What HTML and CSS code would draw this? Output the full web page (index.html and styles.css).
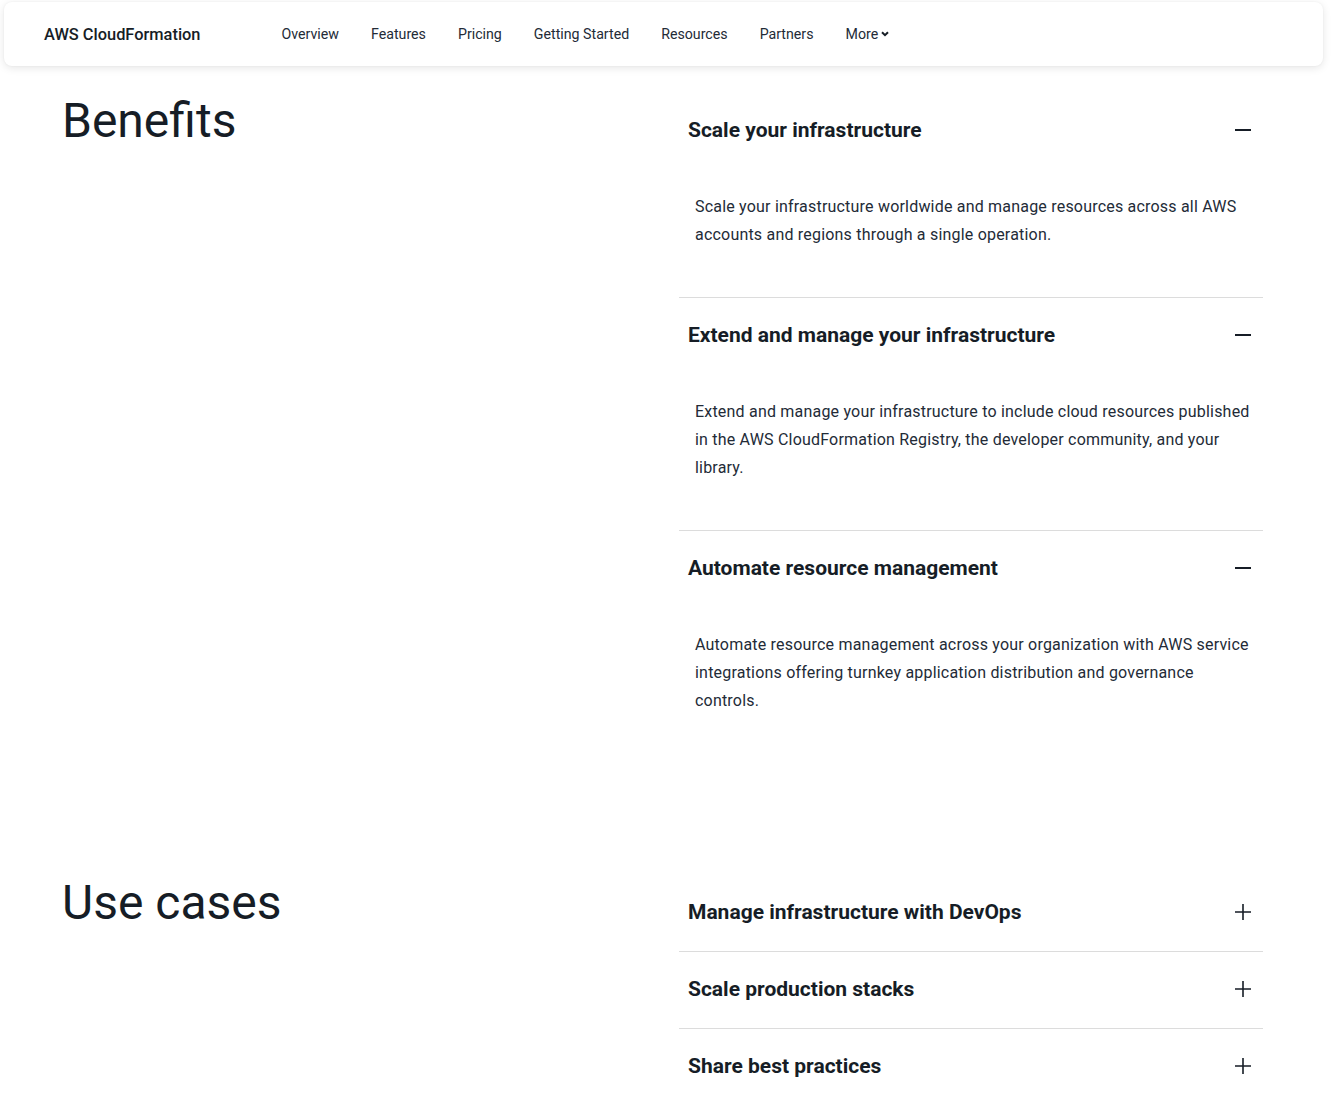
FILE: index.html
```html
<!DOCTYPE html>
<html lang="en">
<head>
<meta charset="utf-8">
<title>AWS CloudFormation</title>
<link rel="stylesheet" href="styles.css">
</head>
<body>
<header class="nav">
  <div class="brand">AWS CloudFormation</div>
  <ul class="nav-links">
    <li>Overview</li>
    <li>Features</li>
    <li>Pricing</li>
    <li>Getting Started</li>
    <li>Resources</li>
    <li>Partners</li>
    <li class="more">More
      <svg class="chev" width="8" height="6" viewBox="0 0 8 6"><path d="M1 1.2l3 3 3-3" fill="none" stroke="#161d26" stroke-width="2"/></svg>
    </li>
  </ul>
</header>

<main>
  <section class="block benefits">
    <h2 class="block-title">Benefits</h2>
    <div class="accordion">
      <div class="item open">
        <div class="item-head">
          <h3>Scale your infrastructure</h3>
          <svg class="icon" width="16" height="16" viewBox="0 0 16 16"><path d="M0 8h16" stroke="#161d26" stroke-width="2"/></svg>
        </div>
        <p class="item-body">Scale your infrastructure worldwide and manage resources across all AWS accounts and regions through a single operation.</p>
      </div>
      <div class="item open">
        <div class="item-head">
          <h3>Extend and manage your infrastructure</h3>
          <svg class="icon" width="16" height="16" viewBox="0 0 16 16"><path d="M0 8h16" stroke="#161d26" stroke-width="2"/></svg>
        </div>
        <p class="item-body">Extend and manage your infrastructure to include cloud resources published in the AWS CloudFormation Registry, the developer community, and your library.</p>
      </div>
      <div class="item open last">
        <div class="item-head">
          <h3>Automate resource management</h3>
          <svg class="icon" width="16" height="16" viewBox="0 0 16 16"><path d="M0 8h16" stroke="#161d26" stroke-width="2"/></svg>
        </div>
        <p class="item-body">Automate resource management across your organization with AWS service integrations offering turnkey application distribution and governance controls.</p>
      </div>
    </div>
  </section>

  <section class="block usecases">
    <h2 class="block-title">Use cases</h2>
    <div class="accordion">
      <div class="item">
        <div class="item-head">
          <h3>Manage infrastructure with DevOps</h3>
          <svg class="icon" width="16" height="16" viewBox="0 0 16 16"><path d="M0 8h16M8 0v16" stroke="#161d26" stroke-width="1.6"/></svg>
        </div>
      </div>
      <div class="item">
        <div class="item-head">
          <h3>Scale production stacks</h3>
          <svg class="icon" width="16" height="16" viewBox="0 0 16 16"><path d="M0 8h16M8 0v16" stroke="#161d26" stroke-width="1.6"/></svg>
        </div>
      </div>
      <div class="item">
        <div class="item-head">
          <h3>Share best practices</h3>
          <svg class="icon" width="16" height="16" viewBox="0 0 16 16"><path d="M0 8h16M8 0v16" stroke="#161d26" stroke-width="1.6"/></svg>
        </div>
      </div>
    </div>
  </section>
</main>
</body>
</html>
```

FILE: styles.css
```css
* { box-sizing: border-box; }

html, body {
  margin: 0;
  padding: 0;
  background: #ffffff;
}

body {
  font-family: Roboto, "Liberation Sans", sans-serif;
  color: #161d26;
  overflow: hidden;
}

.nav {
  display: flex;
  align-items: center;
  height: 64px;
  margin: 2px 21px 0 4px;
  padding: 0 40px;
  background: #fff;
  border-radius: 8px;
  box-shadow: 0 2px 8px rgba(0, 0, 0, 0.10), 0 0 2px rgba(0, 0, 0, 0.05);
}

.brand {
  font-size: 16.4px;
  font-weight: 500;
  color: #161d26;
  white-space: nowrap;
}

.nav-links {
  display: flex;
  gap: 32px;
  list-style: none;
  margin: -1px 0 0 81px;
  padding: 0;
  font-size: 14.2px;
  color: #232b37;
}

.nav-links li {
  display: flex;
  align-items: center;
  white-space: nowrap;
}

.chev { margin-left: 3px; }

main {
  padding: 0 81px 0 64px;
}

.block {
  display: grid;
  grid-template-columns: 615px 584px;
}

.benefits { margin-top: 27px; }
.usecases { margin-top: 112px; }

.block-title {
  margin: 0 0 0 -2px;
  font-size: 48px;
  line-height: 56px;
  font-weight: 400;
  color: #161d26;
}

.item {
  border-bottom: 1px solid #dcdcdc;
}

.item.last { border-bottom: none; }

.item-head {
  display: flex;
  align-items: center;
  justify-content: space-between;
  padding: 23px 12px 25px 9px;
}

.item-head h3 {
  margin: 0;
  font-size: 21px;
  line-height: 28px;
  font-weight: 700;
  color: #161d26;
}

.icon { flex: none; }

.item-body {
  margin: 0;
  padding: 24px 8px 48px 16px;
  font-size: 16px;
  line-height: 28px;
  letter-spacing: 0.2px;
  color: #232b37;
}
```
